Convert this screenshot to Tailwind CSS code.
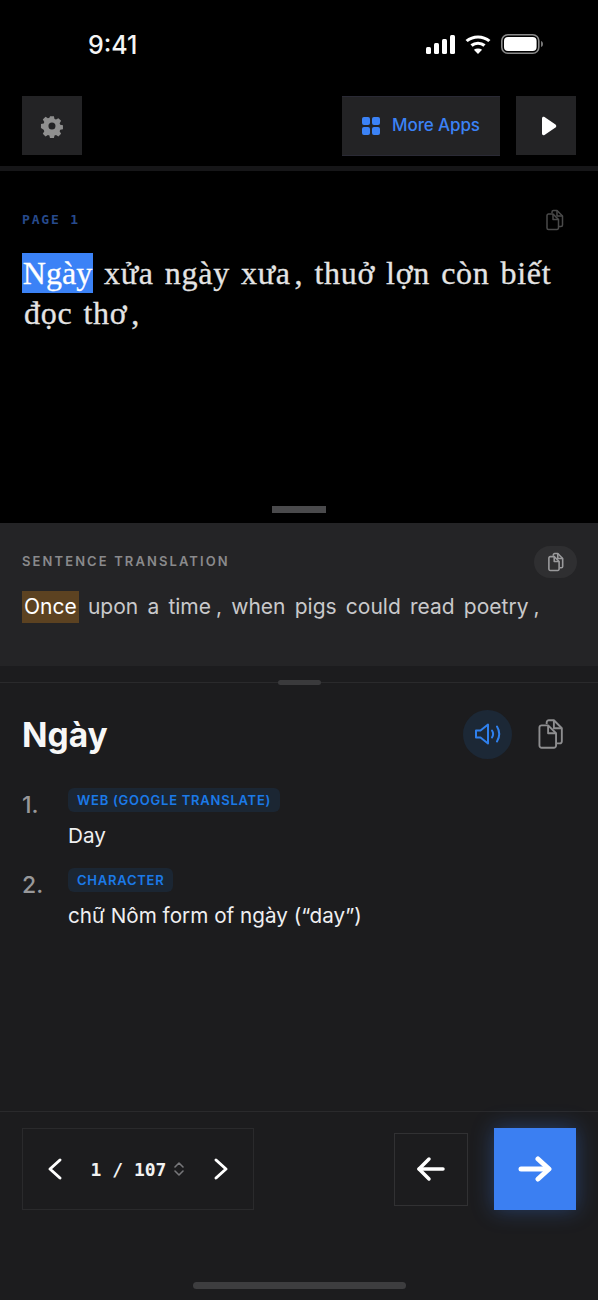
<!DOCTYPE html>
<html lang="en">
<head>
  <meta charset="UTF-8" />
  <meta name="viewport" content="width=device-width, initial-scale=1.0" />
  <title>Reader</title>
  <script src="https://cdn.jsdelivr.net/npm/@tailwindcss/browser@4"></script>
</head>
<body class="bg-black font-['Inter',sans-serif] text-white">
  <div class="w-[598px] h-[1300px] flex flex-col overflow-hidden">

    <!-- status bar -->
    <div class="h-[96px] shrink-0 flex justify-between pl-[88px] pr-[55px] pt-[30px]">
      <span class="text-[25px] leading-[30px] font-medium text-[#f5f5f5]">9:41</span>
      <div class="flex items-center gap-[10px] h-[28px]">
        <svg width="30" height="20" viewBox="0 0 30 20" fill="white"><rect x="1" y="13" width="5" height="7" rx="1.5"/><rect x="9" y="9" width="5" height="11" rx="1.5"/><rect x="17" y="5" width="5" height="15" rx="1.5"/><rect x="25" y="1" width="5" height="19" rx="1.5"/></svg>
        <svg width="26" height="20" viewBox="0 0 24 20" preserveAspectRatio="none" fill="none" stroke="white" stroke-width="3"><path d="M1.5 7C7.5 1.5 16.5 1.5 22.5 7"/><path d="M6 11.5C9.5 8.5 14.500 8.500 18 11.500"/><path d="M12 20l-3.800-4.200C10.300 14.200 13.700 14.200 15.800 15.800Z" fill="white" stroke="none"/></svg>
        <svg width="42" height="20" viewBox="0 0 42 20" fill="none"><rect x="0.800" y="0.800" width="37" height="18.400" rx="6" stroke="#8a8a8a" stroke-width="1.600"/><rect x="3" y="3" width="32.600" height="14" rx="4" fill="white"/><path d="M40 7c1.500.5 2 1.500 2 3s-.5 2.500-2 3Z" fill="#777"/></svg>
      </div>
    </div>

    <!-- toolbar -->
    <div class="h-[59px] shrink-0 flex items-center px-[22px]">
      <button class="w-[60px] h-[59px] bg-[#232325] flex items-center justify-center">
        <svg width="24" height="24" viewBox="0 0 24 24" fill="#8f8f8f"><path fill-rule="evenodd" d="M9.800 1h4.400l.7 3.100 1.700.7 2.700-1.700 3.100 3.100-1.700 2.700.7 1.700 3.100.7v4.400l-3.100.7-.7 1.700 1.700 2.700-3.100 3.100-2.700-1.700-1.700.7-.7 3.100H9.800l-.7-3.100-1.700-.7-2.700 1.700-3.100-3.100 1.700-2.700-.7-1.700L-.5 14.200V9.800l3.100-.7.7-1.700-1.700-2.700 3.100-3.100 2.700 1.700 1.700-.7ZM12 8a4 4 0 1 0 0 8 4 4 0 0 0 0-8Z" transform="translate(1.400 1.400) scale(.88)"/></svg>
      </button>
      <button class="ml-auto w-[158px] h-[60px] bg-[#232325] border-t border-b border-[#2a2a35] flex items-center justify-center gap-[12px] text-[#3b82f6] text-[17px] font-medium tracking-[-0.100px]">
        <svg width="18" height="18" viewBox="0 0 18 18" fill="#3b82f6"><rect width="8" height="8" rx="2"/><rect x="10" width="8" height="8" rx="2"/><rect y="10" width="8" height="8" rx="2"/><rect x="10" y="10" width="8" height="8" rx="2"/></svg>
        More Apps
      </button>
      <button class="ml-[16px] w-[60px] h-[59px] bg-[#232325] flex items-center justify-center">
        <svg class="ml-[5px]" width="16" height="20" viewBox="0 0 16 20" fill="white"><path d="M1 2.500C1 1 2.300.4 3.500 1.100l11 7.300c1 .7 1 2.500 0 3.200l-11 7.300C2.300 19.600 1 19 1 17.500Z"/></svg>
      </button>
    </div>
    <div class="h-[5px] mt-[11px] shrink-0 bg-[#161618]"></div>

    <!-- reader -->
    <div class="relative h-[352px] shrink-0 px-[22px] pt-[39px]">
      <div class="flex justify-between items-center h-[20px]">
        <span class="font-['DejaVu_Sans_Mono',monospace] font-bold text-[13px] tracking-[1.800px] text-[#274a8c]">PAGE 1</span>
        <svg class="mr-[12px]" width="18" height="22" viewBox="0 0 18 22" fill="none" stroke="#4a4a4a" stroke-width="1.500" stroke-linejoin="round"><path d="M6 4V3a1.500 1.500 0 0 1 1.500-1.500H11l5.500 5.500v9a1.500 1.500 0 0 1-1.500 1.500h-2"/><path d="M11 1.500V7h5.500"/><path d="M2.500 5H7l5.500 5.500V19a1.500 1.500 0 0 1-1.500 1.500H2.500A1.500 1.500 0 0 1 1 19V6.500A1.500 1.500 0 0 1 2.500 5Z"/><path d="M7 5v5.500h5.500"/></svg>
      </div>
      <p class="mt-[23px] font-['Liberation_Serif',serif] text-[32px] leading-[40px] tracking-[0.700px] text-[#e4e4e4] [word-spacing:2.400px] [-webkit-text-stroke:0.300px_#e4e4e4]"><span class="bg-[#3b82f6] text-white inline-block w-[71px] text-center tracking-normal [-webkit-text-stroke:0.300px_white]">Ngày</span> xửa ngày xưa<span class="ml-[4px]">,</span> thuở lợn còn biết<br /><span class="pl-[2px]">đọc thơ<span class="ml-[4px]">,</span></span></p>
      <div class="absolute bottom-[10px] left-[272px] w-[54px] h-[7px] bg-[#4a4a4c]"></div>
    </div>

    <!-- sentence translation -->
    <div class="h-[143px] shrink-0 bg-[#242426] px-[22px] pt-[23px]">
      <div class="flex justify-between items-center h-[32px]">
        <span class="text-[13px] font-semibold tracking-[2.100px] text-[#8a8a8c]">SENTENCE TRANSLATION</span>
        <span class="w-[43px] h-[32px] rounded-full bg-[#2f2f31] flex items-center justify-center -mr-[1px]">
          <svg width="16" height="20" viewBox="0 0 18 22" fill="none" stroke="#9a9a9c" stroke-width="1.800" stroke-linejoin="round"><path d="M6 4V3a1.500 1.500 0 0 1 1.500-1.500H11l5.500 5.500v9a1.500 1.500 0 0 1-1.500 1.500h-2"/><path d="M11 1.500V7h5.500"/><path d="M2.500 5H7l5.500 5.500V19a1.500 1.500 0 0 1-1.500 1.500H2.500A1.500 1.500 0 0 1 1 19V6.500A1.500 1.500 0 0 1 2.500 5Z"/><path d="M7 5v5.500h5.500"/></svg>
        </span>
      </div>
      <p class="mt-[13px] text-[21px] leading-[32px] text-[#c9c9cb] [word-spacing:3.300px]"><span class="bg-[#5c4221] text-white px-[2px] inline-block [word-spacing:0]">Once</span> upon a time<span class="ml-[5px]">,</span> when pigs could read poetry<span class="ml-[5px]">,</span></p>
    </div>

    <!-- dictionary -->
    <div class="relative h-[17px] shrink-0 bg-[#1c1c1e] border-b border-[#2a2a2c]">
      <div class="absolute left-[278px] top-[14px] w-[43px] h-[5px] rounded-full bg-[#3a3a3c]"></div>
    </div>
    <div class="flex-1 bg-[#1c1c1e] px-[22px] pt-[26px] border-b border-[#2a2a2c]">
      <div class="flex items-center justify-between h-[50px]">
        <h1 class="text-[33.500px] font-bold text-[#f7f7f7] mt-[3px]">Ngày</h1>
        <div class="flex items-center gap-[26px] pr-[12px]">
          <span class="w-[49px] h-[49px] rounded-full bg-[#1c2836] flex items-center justify-center">
            <svg width="28" height="24" viewBox="0 0 28 24" fill="none" stroke="#2f80ed" stroke-width="2" stroke-linejoin="round" stroke-linecap="round"><path d="M2 8.500h4.500L14 2.500v19l-7.500-6H2Z"/><path d="M18 8.500c1.300 2 1.300 5 0 7"/><path d="M23 4.500c2.700 4.500 2.700 10.500 0 15"/></svg>
          </span>
          <svg width="26" height="32" viewBox="0 0 18 22" fill="none" stroke="#8e8e90" stroke-width="1.300" stroke-linejoin="round"><path d="M6 4V3a1.500 1.500 0 0 1 1.500-1.500H11l5.500 5.500v9a1.500 1.500 0 0 1-1.500 1.500h-2"/><path d="M11 1.500V7h5.500"/><path d="M2.500 5H7l5.500 5.500V19a1.500 1.500 0 0 1-1.500 1.500H2.500A1.500 1.500 0 0 1 1 19V6.500A1.500 1.500 0 0 1 2.500 5Z"/><path d="M7 5v5.500h5.500"/></svg>
        </div>
      </div>

      <div class="mt-[28px] flex flex-col gap-[17px]">
        <div class="grid grid-cols-[46px_1fr]">
          <span class="text-[23px] leading-[28px] font-medium text-[#98989a] pt-[4px]">1.</span>
          <div>
            <span class="inline-block h-[24px] leading-[24px] px-[9px] rounded-[6px] bg-[#1b2633] text-[13px] font-semibold tracking-[0.750px] text-[#1b7ae8]">WEB (GOOGLE TRANSLATE)</span>
            <p class="mt-[10px] text-[20.700px] leading-[28px] text-[#efeff1]">Day</p>
          </div>
        </div>
        <div class="grid grid-cols-[46px_1fr]">
          <span class="text-[23px] leading-[28px] font-medium text-[#98989a] pt-[4px]">2.</span>
          <div>
            <span class="inline-block h-[24px] leading-[24px] px-[9px] rounded-[6px] bg-[#1b2633] text-[13px] font-semibold tracking-[0.750px] text-[#1b7ae8]">CHARACTER</span>
            <p class="mt-[10px] text-[20.700px] leading-[28px] text-[#efeff1]">chữ Nôm form of ngày (“day”)</p>
          </div>
        </div>
      </div>
    </div>

    <!-- footer -->
    <div class="relative h-[188px] shrink-0 bg-[#1c1c1e] px-[22px] pt-[16px]">
      <div class="flex items-center h-[82px]">
        <div class="w-[232px] h-[82px] border border-[#2a2a2c] flex items-center justify-between px-[24px]">
          <svg width="16" height="26" viewBox="0 0 16 26" fill="none" stroke="white" stroke-width="3" stroke-linecap="round" stroke-linejoin="round"><path d="M13 4 3 13l10 9"/></svg>
          <div class="flex items-center gap-[7px]">
            <span class="font-['DejaVu_Sans_Mono',monospace] font-bold text-[18px] text-[#f2f2f2]">1 / 107</span>
            <svg width="12" height="16" viewBox="0 0 12 16" fill="none" stroke="#77777a" stroke-width="1.600" stroke-linecap="round" stroke-linejoin="round"><path d="M2 6l4-4 4 4"/><path d="M2 10l4 4 4-4"/></svg>
          </div>
          <svg width="16" height="26" viewBox="0 0 16 26" fill="none" stroke="white" stroke-width="3" stroke-linecap="round" stroke-linejoin="round"><path d="M3 4l10 9-10 9"/></svg>
        </div>
        <button class="ml-auto w-[74px] h-[73px] border border-[#313133] flex items-center justify-center">
          <svg width="30" height="26" viewBox="0 0 30 26" fill="none" stroke="white" stroke-width="3.500" stroke-linecap="round" stroke-linejoin="round"><path d="M27 13H3"/><path d="M13 3 3 13l10 10"/></svg>
        </button>
        <button class="ml-[26px] w-[82px] h-[82px] bg-[#3b7ff2] shadow-[0_0_20px_rgba(59,130,246,0.350)] flex items-center justify-center">
          <svg width="34" height="28" viewBox="0 0 34 28" fill="none" stroke="white" stroke-width="5" stroke-linecap="round" stroke-linejoin="round"><path d="M3 14h27"/><path d="M20 4l11 10-11 10"/></svg>
        </button>
      </div>
      <div class="absolute left-[193px] top-[170px] w-[213px] h-[7px] rounded-full bg-[#3d3d3f]"></div>
    </div>
  </div>
</body>
</html>
